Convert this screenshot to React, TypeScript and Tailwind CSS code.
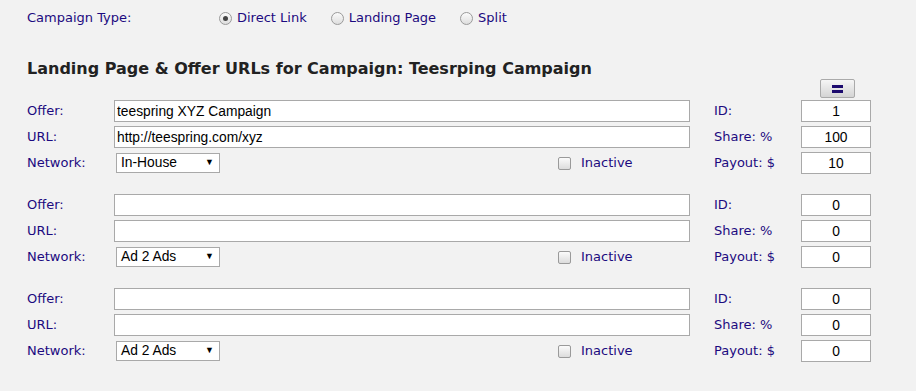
import React from 'react';

const label = "text-[13px] text-[#1c0a80] font-['DejaVu_Sans',Verdana,sans-serif]";
const field = "h-[22px] bg-white border border-[#a9a9a9] px-[2px] text-[13.8px] text-black font-['Liberation_Sans',Arial,sans-serif] outline-none";

type Offer = { offer: string; url: string; network: string; id: string; share: string; payout: string };

const offers: Offer[] = [
  { offer: 'teespring XYZ Campaign', url: 'http://teespring.com/xyz', network: 'In-House', id: '1', share: '100', payout: '10' },
  { offer: '', url: '', network: 'Ad 2 Ads', id: '0', share: '0', payout: '0' },
  { offer: '', url: '', network: 'Ad 2 Ads', id: '0', share: '0', payout: '0' },
];

const Radio = ({ checked, text, className = '' }: { checked?: boolean; text: string; className?: string }) => (
  <label className={`flex items-center ${className}`}>
    <span className="w-[13px] h-[13px] rounded-full border border-[#9a9a9a] bg-gradient-to-b from-[#fbfbfb] to-[#dedede] flex items-center justify-center">
      {checked && <span className="w-[5px] h-[5px] rounded-full bg-[#444]" />}
    </span>
    <span className={`${label} ml-[5px]`}>{text}</span>
  </label>
);

const Checkbox = () => (
  <span className="w-[13px] h-[13px] rounded-[2px] border border-[#9a9a9a] bg-gradient-to-b from-[#fbfbfb] to-[#dcdcdc]" />
);

const Block = ({ o }: { o: Offer }) => (
  <div className="grid grid-cols-[87px_576px_24px_87px_70px] grid-rows-[22px_22px_22px] gap-y-[4px] items-center">
    <span className={label}>Offer:</span>
    <input className={field} defaultValue={o.offer} />
    <span />
    <span className={label}>ID:</span>
    <input className={`${field} text-center`} defaultValue={o.id} />

    <span className={label}>URL:</span>
    <input className={field} defaultValue={o.url} />
    <span />
    <span className={label}>Share: %</span>
    <input className={`${field} text-center`} defaultValue={o.share} />

    <span className={label}>Network:</span>
    <div className="flex items-center">
      <div className="ml-[2px] w-[104px] h-[20px] bg-white border border-[#a9a9a9] flex items-center justify-between pl-[4px] pr-[5px] text-[13.8px] text-black font-['Liberation_Sans',Arial,sans-serif]">
        <span>{o.network}</span>
        <span className="text-[9px]">▼</span>
      </div>
      <div className="ml-[338px] flex items-center">
        <Checkbox />
        <span className={`${label} ml-[10px]`}>Inactive</span>
      </div>
    </div>
    <span />
    <span className={label}>Payout: $</span>
    <input className={`${field} text-center`} defaultValue={o.payout} />
  </div>
);

const App: React.FC = () => {
  return (
    <div className="w-[916px] h-[391px] bg-[#f2f2f2] pl-[27px] overflow-hidden">
      <div className="h-[36px] flex items-center">
        <span className={`${label} w-[192px]`}>Campaign Type:</span>
        <Radio checked text="Direct Link" />
        <Radio text="Landing Page" className="ml-[24px]" />
        <Radio text="Split" className="ml-[24px]" />
      </div>

      <h2 className="mt-[23px] text-[16px] leading-[20px] font-bold text-[#222] font-['DejaVu_Sans',Verdana,sans-serif]">
        Landing Page &amp; Offer URLs for Campaign: Teesrping Campaign
      </h2>

      <div className="grid grid-cols-[87px_576px_24px_87px_70px] h-[21px] items-start">
        <span className="col-start-5 justify-self-center ml-[2px]">
          <button className="w-[35px] h-[19px] border border-[#aaa] rounded-[2px] bg-gradient-to-b from-[#f6f6f6] to-[#d4d4d4] flex items-center justify-center">
            <span className="flex flex-col gap-[2px]">
              <span className="block w-[11px] h-[3px] bg-[#1c0a6e]" />
              <span className="block w-[11px] h-[3px] bg-[#1c0a6e]" />
            </span>
          </button>
        </span>
      </div>

      <div className="flex flex-col gap-[20px]">
        {offers.map((o, i) => (
          <Block key={i} o={o} />
        ))}
      </div>
    </div>
  );
};

export default App;
